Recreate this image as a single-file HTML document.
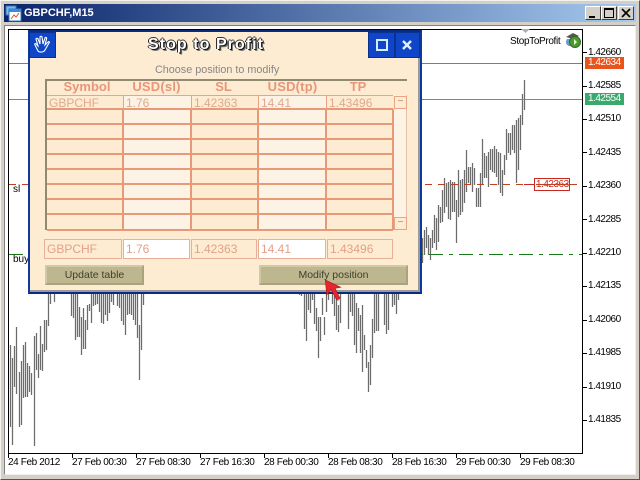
<!DOCTYPE html>
<html><head><meta charset="utf-8"><style>
html,body{margin:0;padding:0;width:640px;height:480px;overflow:hidden;background:#d4d0c8}
*{box-sizing:border-box}
.a{position:absolute}
.t{position:absolute;white-space:nowrap;font-family:"Liberation Sans",sans-serif}
.p{font-size:10px;letter-spacing:-.5px;color:#000;left:588px;line-height:10px}
.d{font-size:10px;letter-spacing:-.38px;color:#000;top:458px;line-height:10px}
.h{font-size:13px;font-weight:bold;color:#e8967a;top:80px;line-height:14px;text-align:center}
.c{font-size:12px;color:#e0a890;top:96px;line-height:14px}
.i{position:absolute;top:239px;height:20px;border:1px solid #e8b098;font:12px/18px "Liberation Sans",sans-serif;color:#e4a088;padding-left:2px;white-space:nowrap}
.b{position:absolute;top:265px;height:20px;background:#bdb68f;border-top:2px solid #cfc9a8;border-left:2px solid #cfc9a8;border-right:2px solid #a9a27e;border-bottom:2px solid #a9a27e;font:10.500px/16px "Liberation Sans",sans-serif;color:#3f3f30;text-align:center}
</style></head><body>
<div class="a" style="left:0;top:0;width:640px;height:480px;background:#d4d0c8;border:1px solid #f4f2ec;border-right-color:#555;border-bottom-color:#555"></div>
<div class="a" style="left:4px;top:4px;width:632px;height:18px;background:linear-gradient(90deg,#0a246a,#a6caf0)"></div>
<svg class="a" style="left:5px;top:5px" width="18" height="17"><rect x="1" y="1" width="10" height="9" fill="#7fb8e8" stroke="#3a78b8"/><rect x="4" y="4" width="12" height="12" fill="#fff" stroke="#2a78c8"/><rect x="4" y="4" width="12" height="3" fill="#3a8ad8"/><path d="M6 14l3-4 2 2 3-4" stroke="#e05020" fill="none"/></svg>
<div class="t" style="left:24px;top:6px;font-size:11px;font-weight:bold;color:#fff;line-height:14px">GBPCHF,M15</div>
<div class="a" style="left:585px;top:6px;width:16px;height:14px;background:#d4d0c8;border:1px solid;border-color:#fff #404040 #404040 #fff"><div class="a" style="left:3px;top:9px;width:6px;height:2px;background:#000"></div></div>
<div class="a" style="left:601px;top:6px;width:16px;height:14px;background:#d4d0c8;border:1px solid;border-color:#fff #404040 #404040 #fff"><div class="a" style="left:2px;top:1px;width:10px;height:10px;border:1px solid #000;border-top-width:2px"></div></div>
<div class="a" style="left:618px;top:6px;width:16px;height:14px;background:#d4d0c8;border:1px solid;border-color:#fff #404040 #404040 #fff"><svg class="a" style="left:2px;top:1px" width="10" height="10"><path d="M1 1l8 8M9 1l-8 8" stroke="#000" stroke-width="1.6"/></svg></div>
<div class="a" style="left:4px;top:25px;width:632px;height:450px;background:#fff;border-top:1px solid #808080;border-left:1px solid #808080;border-right:1px solid #eee;border-bottom:1px solid #eee"></div>
<div class="a" style="left:8px;top:29px;width:575px;height:425px;border:1px solid #000;background:#fff"></div>

<svg class="a" style="left:0;top:0" width="640" height="480">
<path stroke="#6c6c6c" fill="none" stroke-width="1.25" d="M10.5 345V427M12.5 358V445M14.500 346V387M16.500 327V394M19.500 372V427M21.500 361V425M23.500 345V398M25.500 342V397M27.500 363V397M29.500 366V392M31.500 373V395M34.500 336V446M36.500 333V370M38.500 354V378M40.500 326V370M42.500 344V371M44.500 320V352M46.500 320V350M48.500 290V326M50.500 290V304M54.500 290V302M71.500 290V316M73.500 290V318M75.500 290V340M77.500 290V337M79.500 307V337M81.500 317V355M83.500 308V349M85.500 320V349M87.500 305V330M89.500 304V311M91.500 290V323M93.500 290V306M95.500 290V305M97.500 290V304M99.500 290V312M101.500 290V323M103.500 290V324M105.500 290V315M107.500 290V321M109.500 290V313M111.500 290V302M113.500 290V305M117.500 290V306M119.500 290V308M121.500 290V321M123.500 290V325M125.500 290V335M127.500 290V315M129.500 290V314M131.500 290V315M133.500 290V320M135.500 290V325M137.500 290V338M139.500 325V380M141.500 290V350M143.500 290V305
M299.500 290V295M301.500 290V296M304.500 290V329M306.500 290V341M308.500 290V310M310.500 290V313M312.500 290V300M314.500 290V324M316.500 308V331M318.500 317V358M320.500 317V341M322.500 298V315M324.500 317V335M326.500 290V312M328.500 290V300M332.500 290V304M334.500 290V316M336.500 290V330M338.500 305V332M340.500 290V323M348.500 290V329M350.500 290V312M352.500 290V316M354.500 290V345M356.500 303V353M358.500 308V331M360.500 315V353M362.500 305V372M364.500 335V350M366.500 350V368M368.500 362V392M370.500 345V385M372.500 319V358M374.500 294V333M376.500 294V331M378.500 294V331M384.500 290V325M386.500 290V334M388.500 290V330M392.500 290V307M394.500 290V305M396.500 290V314M398.500 290V300
M422.500 238V263M424.500 230V255M426.500 227V248M428.500 235V255M430.500 238V260M432.500 230V248M434.500 215V243M436.500 218V250M438.500 205V242M440.500 207V223M442.500 190V222M444.500 178V213M446.500 183V207M448.500 182V219M450.500 180V220M452.500 182V212M454.500 182V212M456.500 200V243M458.500 170V217M460.500 180V215M462.500 179V212M464.500 170V203M466.500 150V192M468.500 167V183M470.500 167V185M472.500 163V192M474.500 168V185M476.500 188V207M478.500 188V207M480.500 173V207M482.500 139V185M484.500 153V178M486.500 156V178M488.500 152V187M490.500 149V170M492.500 149V172M494.500 146V173M496.500 149V177M498.500 152V185M500.500 153V193M502.500 170V196M504.500 155V175M506.500 129V160M508.500 133V153M510.500 133V155M512.500 125V150M514.500 125V153M516.500 120V183M518.500 118V170M520.500 115V150M522.500 94V125M524.500 80V110"/>
<g shape-rendering="crispEdges">
<path stroke="#c04020" stroke-dasharray="7 6" d="M9 184.500H534M570 184.500H582"/>
<path stroke="#c8281e" d="M524 184.500H535"/>
<path stroke="#1a7a1a" stroke-dasharray="14 6 4 6" d="M9 254.500H582"/>
<path stroke="#000" d="M583 52.500H587M583 86.500H587M583 119.500H587M583 152.500H587M583 186.500H587M583 219.500H587M583 253.500H587M583 286.500H587M583 320.500H587M583 353.500H587M583 387.500H587M583 420.500H587M8.500 454V458M72.500 454V458M136.500 454V458M200.500 454V458M264.500 454V458M328.500 454V458M392.500 454V458M456.500 454V458M520.500 454V458"/>
</g>
<path fill="#b0b0b0" d="M521 29h9l-4.500 4z"/>
</svg>
<div class="a" style="left:9px;top:63px;width:573px;height:1px;background:#d2622c"></div>
<div class="a" style="left:9px;top:99px;width:573px;height:1px;background:#40a47c"></div>

<div class="t p" style="top:48px">1.42660</div>
<div class="a" style="left:585px;top:57px;width:39px;height:12px;background:#e8541c"></div>
<div class="t p" style="top:58px;color:#fff">1.42634</div>
<div class="t p" style="top:81px">1.42585</div>
<div class="a" style="left:585px;top:93px;width:39px;height:12px;background:#3ba86e"></div>
<div class="t p" style="top:94px;color:#fff">1.42554</div>
<div class="t p" style="top:114px">1.42510</div>
<div class="t p" style="top:148px">1.42435</div>
<div class="t p" style="top:181px">1.42360</div>
<div class="t p" style="top:215px">1.42285</div>
<div class="t p" style="top:248px">1.42210</div>
<div class="t p" style="top:281px">1.42135</div>
<div class="t p" style="top:315px">1.42060</div>
<div class="t p" style="top:348px">1.41985</div>
<div class="t p" style="top:382px">1.41910</div>
<div class="t p" style="top:415px">1.41835</div>
<div class="t d" style="left:8px">24 Feb 2012</div>
<div class="t d" style="left:72px">27 Feb 00:30</div>
<div class="t d" style="left:136px">27 Feb 08:30</div>
<div class="t d" style="left:200px">27 Feb 16:30</div>
<div class="t d" style="left:264px">28 Feb 00:30</div>
<div class="t d" style="left:328px">28 Feb 08:30</div>
<div class="t d" style="left:392px">28 Feb 16:30</div>
<div class="t d" style="left:456px">29 Feb 00:30</div>
<div class="t d" style="left:520px">29 Feb 08:30</div>
<div class="t" style="left:510px;top:37px;font-size:10px;letter-spacing:-.35px;line-height:10px;color:#000">StopToProfit</div>
<svg class="a" style="left:564px;top:31px" width="18" height="17"><path d="M2 6l7-4 6 3-6 3z" fill="#555"/><path d="M3 8c-2 3-1 6 2 7h4V8z" fill="#6a9ad0"/><circle cx="11" cy="11" r="5.500" fill="#4a9a30" stroke="#2f6e20"/><path d="M10 8l3 3-3 3z" fill="#e8f4d0"/></svg>
<div class="t" style="left:13px;top:185px;font-size:10px;line-height:10px;color:#000">sl</div>
<div class="t" style="left:13px;top:255px;font-size:10px;line-height:10px;color:#000">buy</div>
<div class="a" style="left:534px;top:178px;width:36px;height:13px;border:1px solid #c8281e;background:#fff"></div>
<div class="t" style="left:536px;top:180px;font-size:10px;letter-spacing:-.5px;line-height:10px;color:#c8281e">1.42363</div>
<div class="a" style="left:536px;top:184px;width:32px;height:1px;background:#c04020"></div>

<!-- panel -->
<div class="a" style="left:28px;top:30px;width:394px;height:264px;background:#fdecd2;border:2px solid #0f3a9a;border-top-color:#0a2a80;border-bottom-color:#0a2a80;box-shadow:inset -2px -2px 0 #9a9a9a"></div>
<div class="a" style="left:29px;top:32px;width:27px;height:26px;background:#0f46c8;border:1px solid #0a3090"></div>
<svg class="a" style="left:31px;top:34px" width="22" height="22" fill="none" stroke="#fff" stroke-width="1.1"><path d="M7 17L4 11C3 9 5 9 6 11L7 12 5 5C5 4 7 4 7 5L9 10 9 3C9 2 11 2 11 3L12 10 14 4C14 3 16 3 15.500 5L14 11 17 8C18 7 19 8 18 9L14 16C13 18 9 19 7 17Z"/></svg>
<div class="a" style="left:368px;top:32px;width:27px;height:26px;background:#0f46c8;border:1px solid #0a3090"></div>
<div class="a" style="left:376px;top:39px;width:12px;height:12px;border:2px solid #d8ecff"></div>
<div class="a" style="left:395px;top:32px;width:25px;height:26px;background:#0f46c8;border:1px solid #0a3090"></div>
<svg class="a" style="left:402px;top:40px" width="10" height="10"><path d="M1 1l8 8M9 1l-8 8" stroke="#e0f0ff" stroke-width="2.400"/></svg>
<div class="t" style="left:148px;top:36px;font-size:16px;font-weight:bold;color:#fff;line-height:18px;letter-spacing:1.05px;text-shadow:1px 1px 0 #111,-1px 0 0 #222,1px 0 0 #222,0 -1px 0 #333,2px 2px 0 #777">Stop to Profit</div>
<div class="t" style="left:155px;top:64px;font-size:10.800px;color:#878787;line-height:12px">Choose position to modify</div>

<div class="a" style="left:45px;top:79px;width:362px;height:2px;background:#8f8a72"></div>
<div class="a" style="left:45px;top:79px;width:2px;height:151px;background:#8f8a72"></div>
<div class="a" style="left:47px;top:109px;width:346px;height:121px;background:#fdecd2"></div>
<div class="a" style="left:124px;top:96px;width:67px;height:134px;background:#fdf3e4"></div>
<div class="a" style="left:259px;top:96px;width:67px;height:134px;background:#fdf3e4"></div>
<svg class="a" style="left:0;top:0" width="640" height="480" shape-rendering="crispEdges"><path stroke="#e89a78" stroke-width="2" fill="none" d="M47 124H393M47 139H393M47 154H393M47 169H393M47 184H393M47 199H393M47 214H393M47 230H393M47 109H393M123 109V230M191 109V230M258 109V230M326 109V230M393 109V230"/><path stroke="#e8a484" fill="none" d="M47 95.500H393M123.500 96V109M191.500 96V109M258.500 96V109M326.500 96V109"/></svg>
<div class="a" style="left:394px;top:95px;width:13px;height:135px;background:#fdf3e4;border-right:1px solid #e8c0a8"></div>
<div class="a" style="left:394px;top:96px;width:13px;height:13px;border:1px solid #e8a484;background:#fdecd2;color:#b08070;font:10px/10px 'Liberation Sans',sans-serif;text-align:center">−</div>
<div class="a" style="left:394px;top:217px;width:13px;height:13px;border:1px solid #e8a484;background:#fdecd2;color:#b08070;font:10px/10px 'Liberation Sans',sans-serif;text-align:center">−</div>

<div class="t h" style="left:49px;width:76px">Symbol</div>
<div class="t h" style="left:123.500px;width:66px;letter-spacing:.2px">USD(sl)</div>
<div class="t h" style="left:190.500px;width:66px">SL</div>
<div class="t h" style="left:259.500px;width:66px;letter-spacing:.2px">USD(tp)</div>
<div class="t h" style="left:325px;width:66px">TP</div>
<div class="t c" style="left:49px">GBPCHF</div>
<div class="t c" style="left:126px">1.76</div>
<div class="t c" style="left:194px">1.42363</div>
<div class="t c" style="left:261px">14.41</div>
<div class="t c" style="left:329px">1.43496</div>

<div class="i" style="left:44px;width:78px">GBPCHF</div>
<div class="i" style="left:123px;width:67px;background:#fff">1.76</div>
<div class="i" style="left:191px;width:66px">1.42363</div>
<div class="i" style="left:258px;width:68px;background:#fff">14.41</div>
<div class="i" style="left:327px;width:66px">1.43496</div>
<div class="b" style="left:45px;width:99px">Update table</div>
<div class="b" style="left:259px;width:149px">Modify position</div>
<svg class="a" style="left:322px;top:278px" width="24" height="26"><path d="M3.300 2L4.700 17 9 11.300 14.700 22 18 20.300 13 10.300 18.700 9.300Z" fill="#e8242c" stroke="#a01818" stroke-width=".6"/><path d="M18.500 21l-3.500 2" stroke="#aaa"/></svg>
</body></html>
